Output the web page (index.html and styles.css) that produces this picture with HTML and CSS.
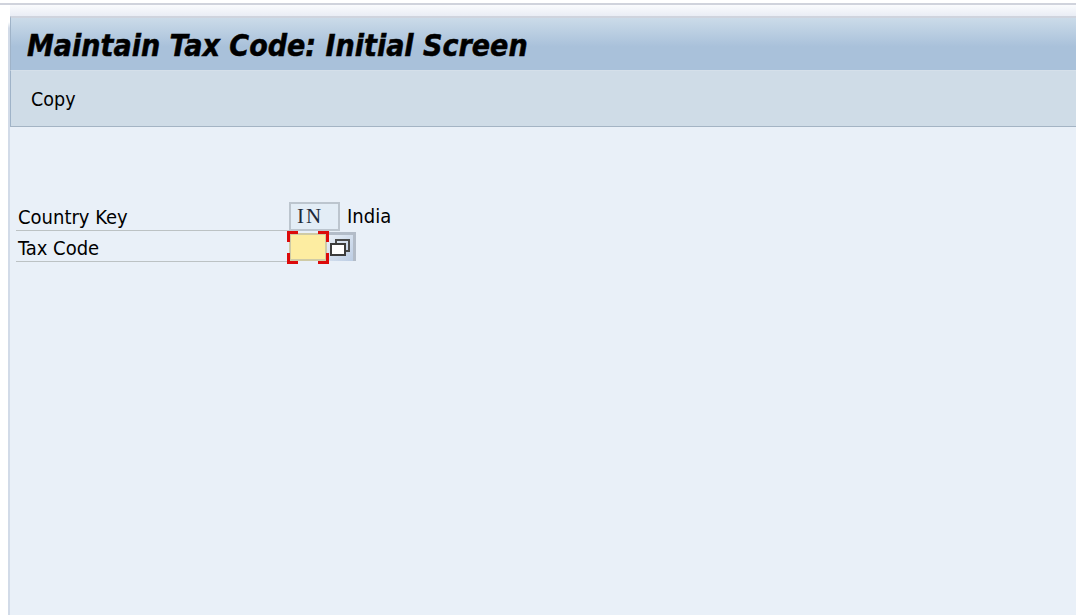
FILE: index.html
```html
<!DOCTYPE html>
<html lang="en">
<head>
    <meta charset="UTF-8">
    <title>Maintain Tax Code: Initial Screen</title>
    <link rel="stylesheet" href="styles.css">
</head>
<body>
    <div class="top-line"></div>
    <div class="window">
        <div class="title-bar">
            <h1>Maintain Tax Code: Initial Screen</h1>
        </div>
        <div class="toolbar">
            <span class="toolbar-btn">Copy</span>
        </div>
        <div class="content">
            <div class="form-row">
                <label class="field-label">Country Key</label>
                <span class="field-display">IN</span>
                <span class="field-text">India</span>
            </div>
            <div class="form-row">
                <label class="field-label">Tax Code</label>
                <span class="field-input">
                    <i class="corner tl"></i><i class="corner tr"></i>
                    <i class="corner bl"></i><i class="corner br"></i>
                </span>
                <span class="help-btn">
                    <svg width="20" height="18" viewBox="0 0 20 18">
                        <path d="M6 5V1H19V12H16" fill="none" stroke="#4a4a4a" stroke-width="2"/>
                        <rect x="1" y="5" width="14" height="11" fill="#fff" stroke="#3c3c3c" stroke-width="2"/>
                    </svg>
                </span>
            </div>
        </div>
    </div>
</body>
</html>
```

FILE: styles.css
```css
html, body {
    margin: 0;
    height: 100%;
    overflow: hidden;
}
body {
    font-family: "DejaVu Sans", Verdana, sans-serif;
    font-stretch: condensed;
    background-color: #fff;
    color: #000;
    display: flex;
    flex-direction: column;
}
.top-line {
    flex: none;
    height: 2px;
    margin-top: 3px;
    background: #d0d3dc;
}
.window {
    flex: 1;
    display: flex;
    flex-direction: column;
    min-height: 0;
    margin-left: 8px;
    padding-top: 11px;
    border-left: 2px solid;
    border-image: linear-gradient(transparent 18px, #d2dbe8 24px) 1;
    background: linear-gradient(#fafbfd, #e9edf5) no-repeat 0 0 / 100% 11px;
}
.title-bar {
    height: 55px;
    box-sizing: border-box;
    border-top: 2px solid #cfd4de;
    border-left: 1px solid #9fb3c8;
    border-bottom: 1px solid #d5e0ea;
    background: linear-gradient(#cbdbe9, #a9c1da 55%, #a9c1da);
    display: flex;
    align-items: center;
}
.title-bar h1 {
    margin: 2px 0 0 16px;
    font-size: 30px;
    font-style: italic;
    font-weight: bold;
    -webkit-text-stroke: 0.5px #000;
}
.toolbar {
    height: 56px;
    box-sizing: border-box;
    background: #cfdce7;
    border-left: 1px solid #9fb3c8;
    border-bottom: 1px solid #a4b4c4;
    display: flex;
    align-items: center;
    padding: 2px 0 0 20px;
}
.toolbar-btn {
    font-size: 19.5px;
}
.content {
    flex: 1;
    background: #e9f0f8;
    padding: 73px 0 0 6px;
}
.form-row {
    display: flex;
    align-items: flex-end;
    height: 31px;
}
.field-label {
    width: 273px;
    height: 100%;
    box-sizing: border-box;
    padding-left: 2px;
    line-height: 35px;
    font-size: 20px;
    border-bottom: 1px solid #bcc2c4;
}
.field-display {
    width: 51px;
    height: 29px;
    box-sizing: border-box;
    border: 2px solid #bcc5ce;
    background: #e3edf6;
    color: #1c2a3a;
    font-family: "Liberation Serif", serif;
    font-stretch: normal;
    font-size: 21px;
    letter-spacing: 2px;
    line-height: 24px;
    padding-left: 6px;
}
.field-text {
    margin-left: 7px;
    font-size: 20px;
    line-height: 29px;
    height: 29px;
}
.field-input {
    position: relative;
    width: 38px;
    height: 28px;
    margin-bottom: 1px;
    box-sizing: border-box;
    background: #fdeda1;
    border: 2px solid #cfcba6;
}
.corner {
    position: absolute;
    width: 8px;
    height: 8px;
    border: 0 solid #dc0a0a;
}
.tl { top: -4px; left: -4px; border-width: 3px 0 0 3px; }
.tr { top: -4px; right: -4px; border-width: 3px 3px 0 0; }
.bl { bottom: -5px; left: -4px; border-width: 0 0 3px 3px; }
.br { bottom: -5px; right: -4px; border-width: 0 3px 3px 0; }
.help-btn {
    width: 29px;
    height: 29px;
    margin-bottom: 1px;
    box-sizing: border-box;
    border-top: 3px solid #b3bcc8;
    border-right: 3px solid #b3bcc8;
    background: linear-gradient(135deg, #eaf0f7, #bccde4);
    display: flex;
    align-items: center;
    justify-content: center;
}
```
